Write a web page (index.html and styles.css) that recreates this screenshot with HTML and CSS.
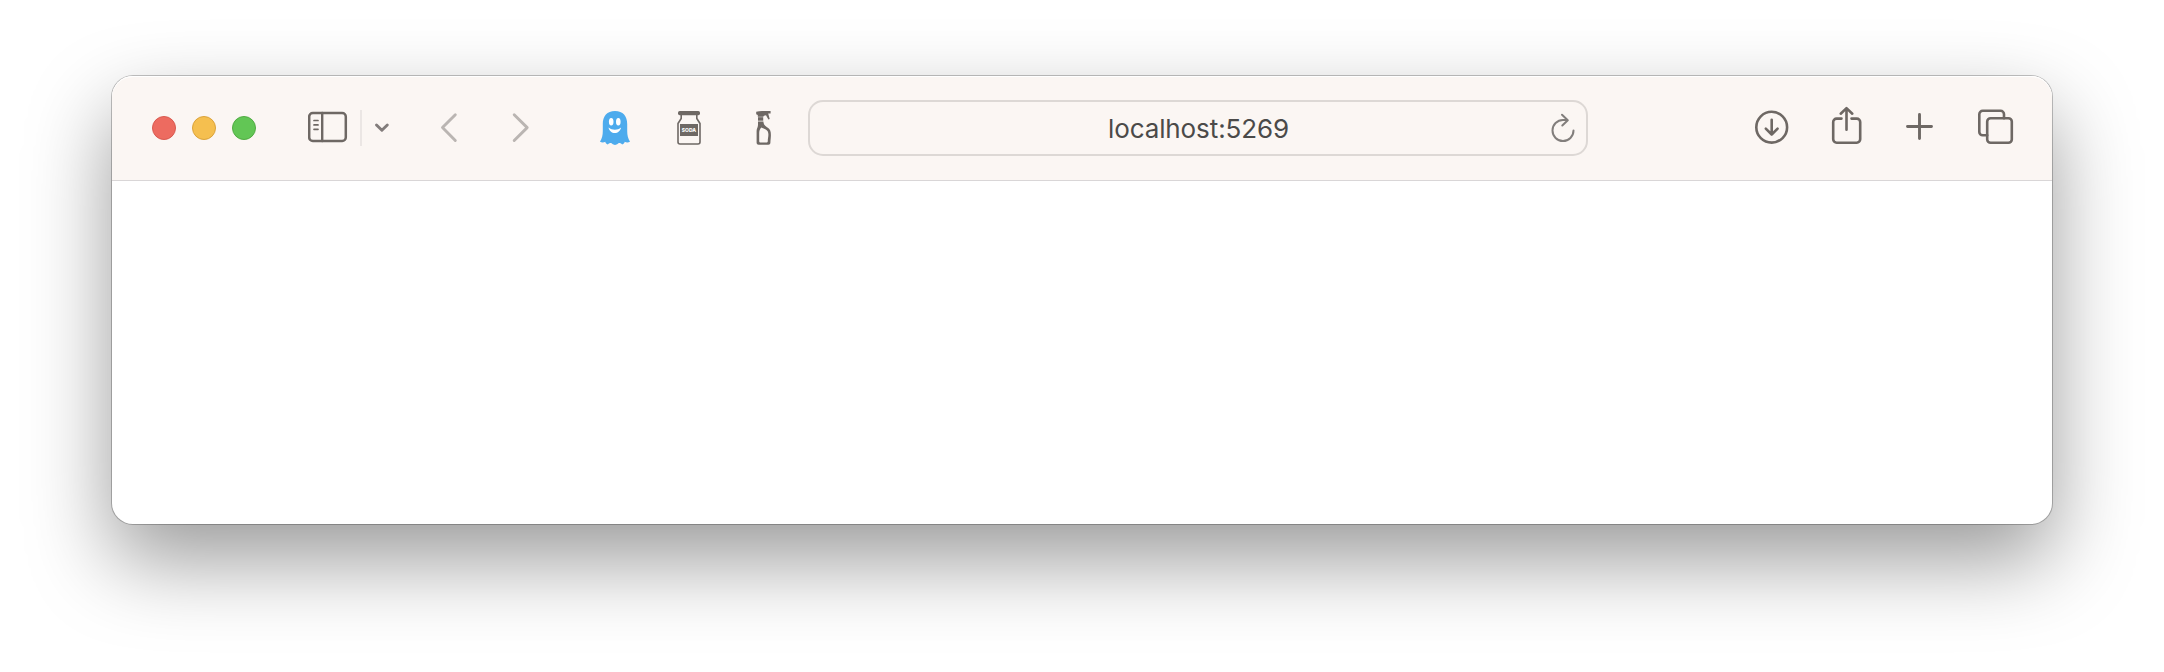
FILE: index.html
```html
<!DOCTYPE html>
<html lang="en">
<head>
<meta charset="utf-8">
<title>localhost:5269</title>
<link rel="stylesheet" href="styles.css">
</head>
<body>
<main class="window">
  <header class="toolbar">
    <div class="lights">
      <span class="light close"></span>
      <span class="light minimize"></span>
      <span class="light zoom"></span>
    </div>
    <div class="sidebar-group">
      <svg class="icon" width="40" height="36" viewBox="0 0 40 36"><rect x="1.200" y="3" width="36.600" height="28" rx="3.600" stroke-width="2.500"/><path d="M14.200 3v28" stroke-width="2.400"/><path d="M6 10.500h4M6 14.900h4M6 19.300h4" stroke-width="1.700"/></svg>
      <span class="divider"></span>
      <svg class="icon menu" width="16" height="12" viewBox="0 0 16 12"><path d="M2.500 3 7.900 8.300 13.300 3" stroke-width="2.900"/></svg>
    </div>
    <nav class="history">
      <svg class="icon" width="18" height="32" viewBox="0 0 18 32"><path d="M15.300 3.700 2.500 16.600 15.300 29.500" stroke-width="2.900"/></svg>
      <svg class="icon" width="18" height="32" viewBox="0 0 18 32"><path d="M2.200 3.700 15.200 16.600 2.200 29.500" stroke-width="2.900"/></svg>
    </nav>
    <div class="extensions">
      <svg width="30" height="34" viewBox="0 0 30 34"><path fill="#4dabed" d="M15 0C7 0 2.800 5.200 2.800 13v7c0 4-.8 7.500-2.800 10.800 1.700.8 3.800.8 5.200 0 .4 1.300 1.300 2.200 2.600 2.700 1-.9 2.200-1.400 3.400-1.400.9.900 2.200 1.500 3.800 1.900 1.600-.4 2.900-1 3.800-1.900 1.200 0 2.400.5 3.400 1.400 1.300-.5 2.200-1.400 2.600-2.700 1.400.8 3.500.8 5.200 0-2-3.300-2.800-6.800-2.800-10.800v-7C27.200 5.200 23 0 15 0z"/><ellipse cx="11.200" cy="10.700" rx="2.300" ry="3.800" fill="#fff"/><ellipse cx="18.300" cy="10.700" rx="2.300" ry="3.800" fill="#fff"/><path fill="#fff" d="M8.500 16.500c3.800 3 9 3 12.600 0-.7 3.500-3.300 5.500-6.300 5.500s-5.600-2-6.300-5.500z"/></svg>
      <svg class="icon" width="24" height="34" viewBox="0 0 24 34"><rect x="1" y="0" width="22" height="4.200" rx="1.700" fill="#6e6864" stroke="none"/><path d="M4.200 4v3.500L1 12.500V31a2 2 0 0 0 2 2h18a2 2 0 0 0 2-2V12.500l-3.200-5V4" stroke-width="1.600"/><path d="M3 13h18v12H3z" fill="#6e6864" stroke="none"/><text class="jar-label" x="12" y="20.800">SODA</text></svg>
      <svg width="16" height="34" viewBox="0 0 16 34" fill="#6e6864"><path d="M.2.800Q3 0 6 0h8.600v2.600h-2.400l1.500 5.500-1.300.4-2.400-4.300-2 .6-.8 1H1.800V4L.2 3.200z"/><path d="M2 6.200h5.200v3.500H2z"/><path fill-rule="evenodd" d="M2 10.400h5.400c.3 3.600 2 4.600 4.500 6.300 2.200 1.600 3 3.600 3 7.300 0 3-.5 5-.5 7.800 0 1.200-.8 2-2 2H2.600c-1.200 0-2-.8-2-2V20c0-2.700 1.400-3.500 1.400-6zM5.400 16.500C3.600 18.300 3.200 20 3.200 22.500V30c0 1 .5 1.600 1.500 1.600h5.500c1 0 1.600-.6 1.600-1.600 0-2.500.6-4 .6-6.200 0-2.800-.7-4-2.600-5.300z"/></svg>
    </div>
    <div class="address">
      <span class="url">localhost:5269</span>
      <svg class="reload" width="26" height="30" viewBox="0 0 26 30"><path d="M23.500 17.500a10.500 10.500 0 1 1-10.500-10.500h4.500M12 1.800 17.800 7.200l-5.500 5.300"/></svg>
    </div>
    <div class="actions">
      <svg class="icon" width="36" height="40" viewBox="0 0 36 40"><circle cx="17.700" cy="21.200" r="15.400"/><path d="M17.700 13.800v14.700M11.800 22.600l5.900 5.900 5.900-5.900"/></svg>
      <svg class="icon" width="32" height="40" viewBox="0 0 32 40"><path d="M10.500 12.600H5.600a3.400 3.400 0 0 0-3.400 3.400v17.300a3.400 3.400 0 0 0 3.400 3.400h20.200a3.400 3.400 0 0 0 3.400-3.400V16a3.400 3.400 0 0 0-3.400-3.400H20.500M15.500 23.700V2.300M9.700 7.700l5.800-5.600 5.800 5.600"/></svg>
      <svg class="icon" width="28" height="40" viewBox="0 0 28 40"><path d="M13.500 8.500v24M1.500 20.500h24" stroke-width="2.900"/></svg>
      <svg class="icon" width="36" height="40" viewBox="0 0 36 40"><rect x="9.200" y="12.200" width="24.600" height="24.600" rx="3.400"/><path d="M9.200 29.300H4.700a3.400 3.400 0 0 1-3.400-3.400V8.200a3.400 3.400 0 0 1 3.400-3.400h17.900a3.400 3.400 0 0 1 3.400 3.400v4"/></svg>
    </div>
  </header>
  <section class="page"></section>
</main>
</body>
</html>
```
FILE: styles.css
```css
* {
  box-sizing: border-box;
}

body {
  margin: 0;
  height: 672px;
  padding: 76px 112px 148px;
  background: #fff;
  overflow: hidden;
  font-family: Inter, "Liberation Sans", sans-serif;
}

.window {
  display: flex;
  flex-direction: column;
  height: 448px;
  border-radius: 21px;
  background: #fff;
  box-shadow: 0 0 0 1px rgba(0, 0, 0, 0.23), 0 36px 84px rgba(0, 0, 0, 0.4);
}

.toolbar {
  display: flex;
  align-items: center;
  height: 105px;
  padding: 0 38px 0 40px;
  background: #fbf6f3;
  border-bottom: 1px solid #d9d6d7;
  border-radius: 21px 21px 0 0;
  box-shadow: inset 0 1px 0 #fff;
}

.toolbar svg {
  display: block;
  flex: none;
}

.icon {
  fill: none;
  stroke: #6e6864;
  stroke-width: 2.6;
  stroke-linecap: round;
  stroke-linejoin: round;
}

.lights {
  display: flex;
  gap: 16px;
}

.light {
  width: 24px;
  height: 24px;
  border-radius: 50%;
  border: 1px solid;
}

.close {
  background: #ed6b60;
  border-color: #d95a50;
}

.minimize {
  background: #f5bf4f;
  border-color: #dba33b;
}

.zoom {
  background: #62c655;
  border-color: #51ac43;
}

.sidebar-group {
  display: flex;
  align-items: center;
  margin-left: 52px;
}

.divider {
  width: 2px;
  height: 36px;
  margin: 0 12px;
  background: #ebe6e4;
}

.menu {
  stroke: #827c7b;
}

.history {
  display: flex;
  gap: 54px;
  margin: -2px 0 0 50px;
}

.history .icon {
  stroke: #bab5b2;
}

.extensions {
  display: flex;
  margin-left: 70px;
  gap: 47px;
}

.extensions svg:last-child {
  margin-left: 8px;
}

.jar-label {
  fill: #fff;
  stroke: none;
  font-size: 5px;
  font-weight: 800;
  text-anchor: middle;
}

.address {
  display: flex;
  align-items: center;
  width: 780px;
  height: 56px;
  margin-left: 36px;
  padding-right: 10px;
  border: 2px solid #ddd8d5;
  border-radius: 15px;
}

.url {
  flex: 1;
  padding: 2px 0 0 37px;
  text-align: center;
  font-size: 26px;
  line-height: 32px;
  letter-spacing: -0.1px;
  color: #4b4a49;
}

.reload {
  fill: none;
  stroke: #827e7c;
  stroke-width: 2;
  stroke-linecap: round;
  stroke-linejoin: round;
}

.actions {
  display: flex;
  align-items: center;
  margin: -4px 0 0 auto;
}

.actions svg:nth-child(2) {
  margin-left: 41px;
}

.actions svg:nth-child(3) {
  margin-left: 43px;
}

.actions svg:nth-child(4) {
  margin-left: 44px;
}

.page {
  flex: 1;
}
```
